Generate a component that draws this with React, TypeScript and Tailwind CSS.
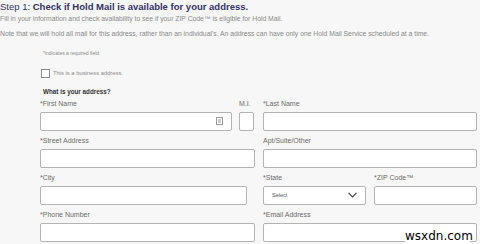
import React from "react";

const font = { fontFamily: '"Liberation Sans", Arial, sans-serif' };

function Field({ label, w, children }: { label: string; w: string; children?: React.ReactNode }) {
  return (
    <div className={`flex flex-col ${w}`}>
      <div className="h-[18px] text-[7px] leading-[12px] text-[#6b6b6b] pt-[4px] whitespace-nowrap">{label}</div>
      <div className="relative h-[19px] bg-white border-[1.5px] border-[#b3b3b3] rounded-[2px]">{children}</div>
    </div>
  );
}

export default function App() {
  return (
    <div className="w-[480px] h-[244px] bg-[#f7f7f7] overflow-hidden relative" style={font}>
      <div className="pt-[1px] text-[9.5px] leading-[12px] text-[#333366] whitespace-nowrap">
        Step 1: <span className="font-bold">Check if Hold Mail is available for your address.</span>
      </div>
      <div className="mt-[1px] text-[6.8px] leading-[10px] text-[#8a8a8a] whitespace-nowrap">
        Fill in your information and check availability to see if your ZIP Code™ is eligible for Hold Mail.
      </div>
      <div className="mt-[5px] text-[6.8px] leading-[10px] text-[#8a8a8a] whitespace-nowrap">
        Note that we will hold all mail for this address, rather than an individual's. An address can have only one Hold Mail Service scheduled at a time.
      </div>
      <div className="pl-[40px]">
        <div className="mt-[10px] pl-[3px] text-[5px] leading-[8px] text-[#8a8a8a]">*indicates a required field</div>
        <div className="mt-[11px] h-[10px] flex items-center gap-[3px] pl-[1px]">
          <div className="w-[9px] h-[9px] bg-white border border-[#8a8a8a]"></div>
          <span className="text-[5.8px] text-[#8a8a8a]">This is a business address.</span>
        </div>
        <div className="mt-[9px] pl-[3px] text-[6.3px] leading-[10px] font-bold text-[#333]">What is your address?</div>
        <div className="-mt-[3px] flex flex-col gap-0">
          <div className="flex">
            <Field label="*First Name" w="w-[192px]">
              <svg className="absolute right-[8px] top-[4px]" width="7" height="8" viewBox="0 0 7 8">
                <rect x="0.5" y="0.5" width="6" height="7" fill="none" stroke="#9a9a9a" />
                <line x1="2" y1="3" x2="5" y2="3" stroke="#9a9a9a" />
                <line x1="2" y1="5" x2="5" y2="5" stroke="#9a9a9a" />
              </svg>
            </Field>
            <div className="w-[7px]"></div>
            <Field label="M.I." w="w-[15px]" />
            <div className="w-[9px]"></div>
            <Field label="*Last Name" w="w-[214px]" />
          </div>
          <div className="flex">
            <Field label="*Street Address" w="w-[215px]" />
            <div className="w-[8px]"></div>
            <Field label="Apt/Suite/Other" w="w-[214px]" />
          </div>
          <div className="flex">
            <Field label="*City" w="w-[207px]" />
            <div className="w-[16px]"></div>
            <Field label="*State" w="w-[103px]">
              <span className="absolute left-[8px] top-[4px] text-[5.5px] text-[#555]">Select</span>
              <svg className="absolute right-[8px] top-[5px]" width="9" height="6" viewBox="0 0 9 6">
                <polyline points="0.5,0.8 4.5,4.8 8.5,0.8" fill="none" stroke="#444" strokeWidth="1.2" />
              </svg>
            </Field>
            <div className="w-[8px]"></div>
            <Field label="*ZIP Code™" w="w-[103px]" />
          </div>
          <div className="flex">
            <Field label="*Phone Number" w="w-[215px]" />
            <div className="w-[8px]"></div>
            <Field label="*Email Address" w="w-[214px]" />
          </div>
        </div>
      </div>
      <div className="absolute left-[405px] top-[228px] w-[65px] h-[16px] bg-white text-[12px] leading-[16px] text-black text-center" style={{ fontFamily: '"DejaVu Sans", sans-serif' }}>
        wsxdn.com
      </div>
    </div>
  );
}
